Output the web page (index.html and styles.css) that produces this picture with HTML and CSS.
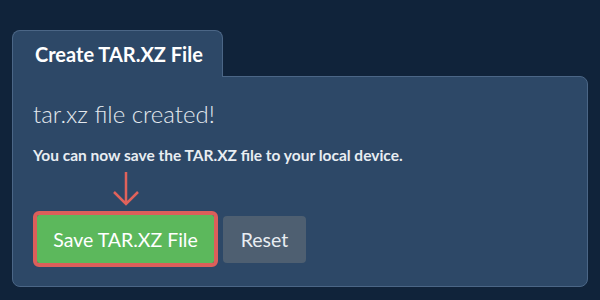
FILE: index.html
```html
<!DOCTYPE html>
<html lang="en">
<head>
    <meta charset="UTF-8">
    <meta name="viewport" content="width=device-width, initial-scale=1.0">
    <link rel="stylesheet" href="styles.css">
    <title>Create TAR.XZ File</title>
</head>
<body>
    <div class="container">
        <div class="tab">Create TAR.XZ File</div>
        <div class="panel">
            <h2 class="status">tar.xz file created!</h2>
            <p class="note">You can now save the TAR.XZ file to your local device.</p>
            <div class="actions">
                <div class="save-wrap">
                    <svg class="arrow" width="28" height="36" viewBox="0 0 28 36">
                        <path d="M14 1 V33 M2 21 L14 33 L26 21" fill="none" stroke="#e0625b" stroke-width="2.5"/>
                    </svg>
                    <button class="btn btn-save">Save TAR.XZ File</button>
                </div>
                <button class="btn btn-reset">Reset</button>
            </div>
        </div>
    </div>
</body>
</html>
```

FILE: styles.css
```css
body {
    font-family: Lato, "Open Sans", sans-serif;
    background-color: #10233a;
    color: #fff;
    margin: 0;
    padding: 0;
}

.container {
    padding: 30px 12px 0;
}

.tab {
    position: relative;
    z-index: 1;
    display: inline-block;
    box-sizing: border-box;
    width: 211px;
    height: 47px;
    margin-bottom: -1px;
    padding: 11px 0 0 22px;
    background-color: #2d4867;
    border: 1px solid #4b6686;
    border-bottom: none;
    border-radius: 8px 8px 0 0;
    font-size: 20px;
    font-weight: 700;
}

.panel {
    box-sizing: border-box;
    width: 576px;
    height: 211px;
    padding: 22px 20px 0;
    background-color: #2d4867;
    border: 1px solid #4b6686;
    border-radius: 0 8px 8px 8px;
}

.status {
    margin: 0;
    font-size: 24px;
    font-weight: 300;
    color: #e3e8ee;
    line-height: 30px;
}

.note {
    margin: 17px 0 0;
    font-size: 15.5px;
    font-weight: 700;
    color: #e8edf2;
    line-height: 19px;
}

.actions {
    display: flex;
    align-items: flex-end;
    gap: 9px;
    margin-top: 6px;
}

.save-wrap {
    display: flex;
    flex-direction: column;
    align-items: center;
    margin-left: 4px;
}

.arrow {
    display: block;
    margin-bottom: 8px;
}

.btn {
    font-family: Lato, "Open Sans", sans-serif;
    font-size: 19.5px;
    color: #fff;
    border: none;
    border-radius: 4px;
    height: 48px;
    cursor: pointer;
}

.btn-save {
    width: 177px;
    background-color: #5cb85c;
    outline: 4px solid #dc5f5a;
    border-radius: 2px;
}

.btn-reset {
    width: 83px;
    height: 47px;
    background-color: #4e5f71;
    color: #e8edf2;
}
```
